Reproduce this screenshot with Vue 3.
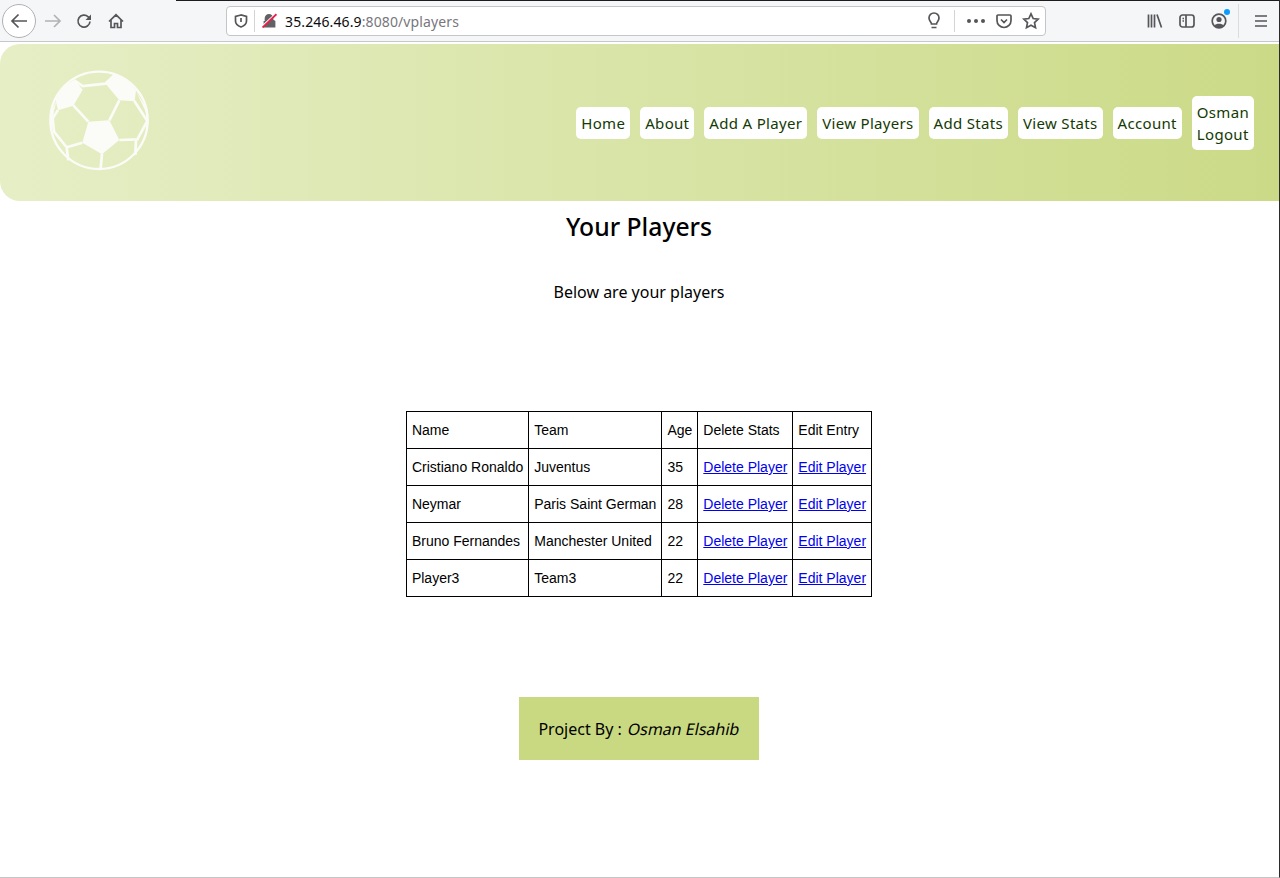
<script setup>
const navLinks = ['Home', 'About', 'Add A Player', 'View Players', 'Add Stats', 'View Stats', 'Account']

const players = [
  { name: 'Cristiano Ronaldo', team: 'Juventus', age: 35 },
  { name: 'Neymar', team: 'Paris Saint German', age: 28 },
  { name: 'Bruno Fernandes', team: 'Manchester United', age: 22 },
  { name: 'Player3', team: 'Team3', age: 22 },
]
</script>

<template>
  <div class="window">
    <div class="browser-bar">
      <div class="nav-buttons">
        <button class="back" type="button" aria-label="Back">
          <svg width="20" height="20" viewBox="0 0 20 20"><path d="M18 10H3M9.500 3.500 3 10l6.500 6.500" /></svg>
        </button>
        <svg class="forward" width="18" height="18" viewBox="0 0 18 18"><path d="M1 9h15M10 3l6 6-6 6" /></svg>
        <svg class="tool" width="16" height="16" viewBox="0 0 16 16"><path d="M14 8.500A6 6 0 1 1 12.200 3.800L14.500 6" /><path class="solid" d="M15 1.500V7H9.500z" /></svg>
        <svg class="tool home" width="16" height="16" viewBox="0 0 16 16"><path d="M1 8.500 8 1.800l7 6.700M3 7v7.500h3.500V10.500h3v4H13V7" /></svg>
      </div>

      <div class="address">
        <svg class="tool shield" width="14" height="14" viewBox="0 0 14 14"><path d="M7 1 1.500 2.500V7c0 3 2.500 5 5.500 6 3-1 5.500-3 5.500-6V2.500z" /><path d="M7 4v4" /></svg>
        <span class="address-sep"></span>
        <svg class="lock" width="15" height="15" viewBox="0 0 14 14"><path class="lock-body" d="M1.500 7.500h1V5a4 4 0 0 1 8 0v1l2 1.500V13.500h-11z" /><path class="lock-halo" d="M0.500 12 12 1.500" /><path class="lock-slash" d="M0.500 13.500 13.500 1" /></svg>
        <span class="url"><span class="host">35.246.46.9</span>:8080/vplayers</span>
        <svg class="tool bulb" width="16" height="18" viewBox="0 0 16 18"><path d="M5.500 12c0-2-2.500-3-2.500-6a5 5 0 0 1 10 0c0 3-2.500 4-2.500 6zM5.500 15.500h5" /></svg>
        <span class="address-sep sep-right"></span>
        <span class="dots"><i></i><i></i><i></i></span>
        <svg class="tool pocket" width="16" height="16" viewBox="0 0 16 16"><path d="M2 2h12a1 1 0 0 1 1 1v4.500a7 7 0 0 1-14 0V3a1 1 0 0 1 1-1zM5 6.500l3 3 3-3" /></svg>
        <svg class="tool star" width="18" height="18" viewBox="0 0 18 18"><path d="m9 1.800 2.200 4.700 5 .6-3.700 3.500 1 5.100L9 13.200l-4.500 2.500 1-5.100L1.800 7.100l5-.6z" /></svg>
      </div>

      <div class="bar-right">
        <svg class="tool" width="16" height="16" viewBox="0 0 16 16"><path d="M1.500 1.500v13M4.500 1.500v13M7.500 1.500v13M10 1.500l4.500 13" /></svg>
        <svg class="tool" width="16" height="16" viewBox="0 0 16 16"><rect x="1" y="2" width="14" height="12" rx="2.500" /><path d="M7 2v12M3.500 5.500H5M3.500 8H5" /></svg>
        <span class="account">
          <svg class="tool" width="16" height="16" viewBox="0 0 16 16"><circle cx="8" cy="8" r="6.800" /><circle class="solid" cx="8" cy="6.500" r="2.600" /><path class="solid" d="M3.500 12.500c1-2.500 8-2.500 9 0a6 6 0 0 1-9 0z" /></svg>
          <span class="badge"></span>
        </span>
        <span class="bar-sep"></span>
        <svg class="tool" width="14" height="14" viewBox="0 0 14 14"><path d="M1 2h12M1 7h12M1 12h12" /></svg>
      </div>
    </div>

    <header class="site-header">
      <svg class="logo" viewBox="54 24 306 306" aria-label="Football">
        <circle class="ball-ring" cx="207" cy="178" r="146" />
        <path class="ball-patch" d="M133 56 158 86 130 134 84 148 76 115 98 78zM255 40 228 70 268 118 314 121 318 88 292 58zM175 182 238 178 268 237 216 280 157 245zM80 118 72 150 64 200 60 160zM318 90 346 150 352 185 354 150z" />
        <path class="ball-line" d="M133 58 158 75 226 68 253 43M130 133 175 182M268 118 238 178M313 120 352 180 322 235 268 237M84 147 68 172 72 212 110 259 157 245M110 259 115 298M216 278 212 322M318 236 316 282" />
      </svg>
      <nav class="site-nav">
        <a v-for="link in navLinks" :key="link" href="#" class="nav-link">{{ link }}</a>
        <div class="nav-link user">
          <a href="#">Osman</a>
          <a href="#">Logout</a>
        </div>
      </nav>
    </header>

    <main class="content">
      <h1>Your Players</h1>
      <p class="lead">Below are your players</p>

      <table class="players">
        <tbody>
          <tr>
            <td>Name</td>
            <td>Team</td>
            <td>Age</td>
            <td>Delete Stats</td>
            <td>Edit Entry</td>
          </tr>
          <tr v-for="player in players" :key="player.name">
            <td>{{ player.name }}</td>
            <td>{{ player.team }}</td>
            <td>{{ player.age }}</td>
            <td><a href="#">Delete Player</a></td>
            <td><a href="#">Edit Player</a></td>
          </tr>
        </tbody>
      </table>

      <footer class="credit">Project By : <em>Osman Elsahib</em></footer>
    </main>
  </div>
</template>

<style>
html,
body {
  margin: 0;
  background: #fff;
}
</style>

<style scoped>
.window {
  box-sizing: border-box;
  height: 878px;
  overflow: hidden;
  border-right: 1px solid #2b2b2b;
  border-bottom: 1px solid #c4c4c4;
  font-family: "Noto Sans", sans-serif;
  color: #000;
}

.browser-bar {
  position: relative;
  box-sizing: border-box;
  height: 42px;
  display: flex;
  align-items: center;
  background: #f5f6f8;
  border-bottom: 1px solid #c6c7c9;
}

.browser-bar::before {
  content: '';
  position: absolute;
  left: 176px;
  right: 0;
  top: 0;
  height: 1px;
  background: #1c1c1c;
}

.browser-bar svg path,
.browser-bar svg rect,
.browser-bar svg circle {
  fill: none;
  stroke: #56565a;
  stroke-width: 1.7;
}

.browser-bar svg .solid {
  fill: #56565a;
  stroke: none;
}

.nav-buttons {
  width: 226px;
  flex: none;
  display: flex;
  align-items: center;
  padding-left: 2px;
  box-sizing: border-box;
}

.back {
  width: 34px;
  height: 34px;
  padding: 0;
  display: flex;
  align-items: center;
  justify-content: center;
  border: 1px solid #b1b1b3;
  border-radius: 50%;
  background: #fff;
}

.forward {
  margin-left: 8px;
}

.browser-bar svg.forward path {
  stroke: #b3b3b5;
}

.nav-buttons .tool {
  margin-left: 14px;
}

.nav-buttons .home {
  margin-left: 16px;
}

.address {
  box-sizing: border-box;
  width: 820px;
  height: 30px;
  flex: none;
  display: flex;
  align-items: center;
  padding-left: 7px;
  border: 1px solid #c4c5c8;
  border-radius: 4px;
  background: #fff;
}

.address-sep {
  width: 1px;
  height: 22px;
  margin: 0 7px 0 6px;
  background: #d4d4d6;
}

.browser-bar svg .lock-body {
  fill: #626266;
  stroke: none;
}

.browser-bar svg .lock-halo {
  stroke: #fff;
  stroke-width: 1.4;
}

.browser-bar svg .lock-slash {
  stroke: #e8204b;
  stroke-width: 1.8;
}

.url {
  flex: 1;
  margin-left: 8px;
  padding-top: 1px;
  font-size: 14px;
  letter-spacing: 0.12px;
  color: #77777c;
  white-space: nowrap;
}

.host {
  color: #0c0c0d;
}

.bulb {
  margin-right: 1px;
}

.sep-right {
  margin: 0 12px 0 11px;
}

.dots {
  display: flex;
  gap: 3px;
  margin-right: 11px;
}

.dots i {
  width: 4px;
  height: 4px;
  border-radius: 50%;
  background: #56565a;
}

.pocket {
  margin-right: 10px;
}

.star {
  margin-right: 5px;
}

.bar-right {
  flex: 1;
  display: flex;
  align-items: center;
  padding-left: 101px;
  gap: 16px;
}

.account {
  position: relative;
  display: flex;
}

.badge {
  position: absolute;
  top: -4px;
  right: -3px;
  width: 6px;
  height: 6px;
  border-radius: 50%;
  background: #0a9dff;
}

.bar-sep {
  width: 1px;
  height: 34px;
  margin: 0 -1px 0 -5px;
  background: #dcdcde;
}

.site-header {
  box-sizing: border-box;
  height: 157px;
  margin-top: 2px;
  padding: 1px 25px 0 48px;
  display: flex;
  align-items: center;
  justify-content: space-between;
  border-radius: 20px 0 0 20px;
  background: linear-gradient(to right, #e6eec6, #cbda87);
}

.logo {
  width: 102px;
  height: 102px;
  margin-bottom: 7px;
}

.ball-ring {
  fill: none;
  stroke: #fbfcf7;
  stroke-width: 7;
}

.ball-patch {
  fill: #fbfcf7;
}

.ball-line {
  fill: none;
  stroke: #fbfcf7;
  stroke-width: 8;
}

.site-nav {
  display: flex;
  align-items: center;
  gap: 10px;
}

.nav-link {
  display: block;
  padding: 5px;
  border-radius: 5px;
  background: #fff;
  color: #143a04;
  font-size: 15px;
  line-height: 22px;
  letter-spacing: 0.315px;
  text-decoration: none;
  white-space: nowrap;
}

.user a {
  display: block;
  color: inherit;
  text-decoration: none;
}

.content {
  box-sizing: border-box;
  padding-right: 1px;
  display: flex;
  flex-direction: column;
  align-items: center;
}

h1 {
  margin: 9px 0 0;
  font-size: 24.7px;
  font-weight: 500;
  line-height: 33px;
}

.lead {
  margin: 38px 0 0;
  font-size: 16px;
  line-height: 22px;
}

.players {
  margin-top: 108px;
  border-collapse: collapse;
  font-family: "Liberation Sans", Arial, sans-serif;
  font-size: 14px;
}

.players td {
  height: 37px;
  box-sizing: border-box;
  padding: 0 5px;
  border: 1px solid #000;
  white-space: nowrap;
}

.players a {
  color: #00e;
}

.credit {
  box-sizing: border-box;
  width: 240px;
  height: 63px;
  margin-top: 100px;
  display: flex;
  align-items: center;
  justify-content: center;
  gap: 6px;
  background: #c9d981;
  font-size: 16px;
}

.credit em {
  display: inline-block;
  font-style: normal;
  transform: skewX(-12deg);
}
</style>
